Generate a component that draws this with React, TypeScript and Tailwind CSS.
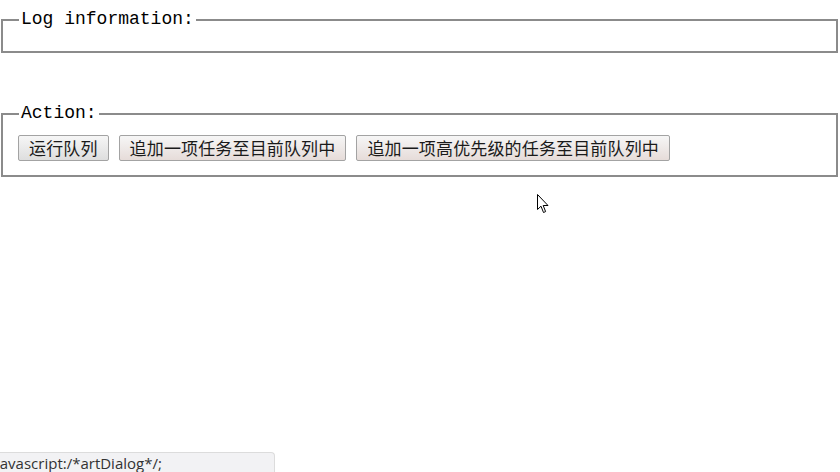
import React from 'react';

const legendFont = { fontFamily: '"Liberation Mono", "Noto Sans CJK SC", monospace' };

const actions = [
    { label: '运行队列', tint: false },
    { label: '追加一项任务至目前队列中', tint: true },
    { label: '追加一项高优先级的任务至目前队列中', tint: true },
];

const App = () => {
    return (
        <div className="relative w-[840px] h-[472px] overflow-hidden bg-white pl-px pr-[2px] pt-[9px]">
            <fieldset className="border-2 border-[#8b8b8b] pl-[16px] h-[44px]">
                <legend className="px-[2px] text-[18px] leading-[21px] text-black" style={legendFont}>Log information:</legend>
            </fieldset>

            <fieldset className="mt-[50px] border-2 border-[#8b8b8b] pl-[16px] pr-4 pt-[11px] pb-[14px]">
                <legend className="px-[2px] text-[18px] leading-[21px] text-black" style={legendFont}>Action:</legend>
                <div className="flex gap-[10px] -ml-px">
                    {actions.map((a, i) => (
                        <button
                            key={i}
                            className={`h-[26px] px-[10px] border border-[#a3a3a3] rounded-[2px] text-[17px] leading-[24px] tracking-[0.15px] text-[#1a1a1a] ${a.tint ? 'bg-gradient-to-b from-[#f6f6f6] to-[#e6dcd9]' : 'bg-gradient-to-b from-[#f6f6f6] to-[#dedede]'}`}
                            style={{ fontFamily: '"Noto Sans CJK SC", sans-serif' }}
                        >
                            {a.label}
                        </button>
                    ))}
                </div>
            </fieldset>

            {/* mouse pointer */}
            <svg className="absolute left-[537px] top-[194px]" width="13" height="20" viewBox="0 0 13 20">
                <path d="M0.5 0.5 L0.5 15.5 L4 12.2 L6.5 18.5 L8.6 17.6 L6.2 11.5 L11 11.5 Z" fill="#fff" stroke="#000" strokeWidth="1" strokeLinejoin="miter" />
            </svg>

            {/* status bar */}
            <div className="absolute left-0 bottom-0 w-[275px] h-[20px] bg-[#f2f2f4] border-t border-r border-[#dcdcdc] rounded-tr-[4px] overflow-hidden">
                <span className="block -ml-[4px] text-[15px] leading-[20px] text-[#333]" style={{ fontFamily: '"Open Sans", "Noto Sans", sans-serif' }}>
                    javascript:/*artDialog*/;
                </span>
            </div>
        </div>
    );
};

export default App;
